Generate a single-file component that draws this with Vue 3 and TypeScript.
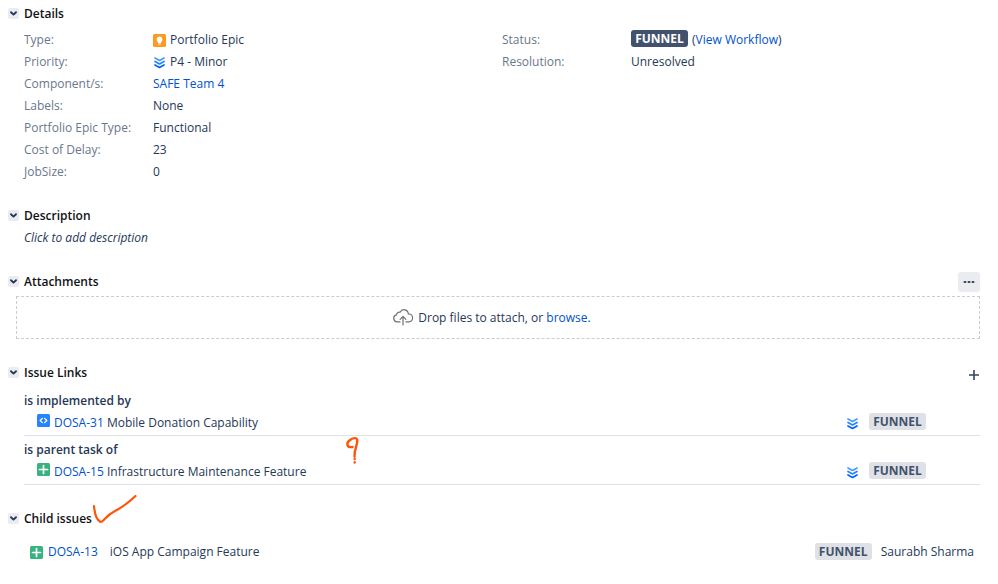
<script setup lang="ts">
import { reactive } from 'vue'

type IconName = 'epic' | 'priority' | 'code' | 'plus'

interface Field {
  label: string
  value: string
  icon?: IconName
  link?: boolean
}

interface LinkGroup {
  relation: string
  icon: IconName
  issueKey: string
  summary: string
  status: string
}

const fields: Field[] = [
  { label: 'Type:', value: 'Portfolio Epic', icon: 'epic' },
  { label: 'Priority:', value: 'P4 - Minor', icon: 'priority' },
  { label: 'Component/s:', value: 'SAFE Team 4', link: true },
  { label: 'Labels:', value: 'None' },
  { label: 'Portfolio Epic Type:', value: 'Functional' },
  { label: 'Cost of Delay:', value: '23' },
  { label: 'JobSize:', value: '0' },
]

const linkGroups: LinkGroup[] = [
  { relation: 'is implemented by', icon: 'code', issueKey: 'DOSA-31', summary: 'Mobile Donation Capability', status: 'FUNNEL' },
  { relation: 'is parent task of', icon: 'plus', issueKey: 'DOSA-15', summary: 'Infrastructure Maintenance Feature', status: 'FUNNEL' },
]

const open = reactive({ details: true, description: true, attachments: true, links: true, children: true })
</script>

<template>
  <main class="issue">
    <svg class="defs" width="0" height="0" aria-hidden="true">
      <symbol id="chevron" viewBox="0 0 11 11">
        <path d="M3 4.2 5.5 6.6 8 4.2" fill="none" stroke="#253858" stroke-width="1.9" stroke-linecap="round" stroke-linejoin="round" />
      </symbol>
      <symbol id="epic" viewBox="0 0 13 13">
        <rect width="13" height="13" rx="1.5" fill="#ff991f" />
        <path d="M6.5 2.4a3 3 0 0 0-1.6 5.5v1h3.2v-1a3 3 0 0 0-1.6-5.5zM5.1 9.5h2.8v.9H5.1z" fill="#fff" />
      </symbol>
      <symbol id="priority" viewBox="0 0 13 13">
        <g fill="none" stroke-width="1.7" stroke-linecap="round" stroke-linejoin="round">
          <path d="M2 1.9 6.5 4.4 11 1.9" stroke="#4c9aff" />
          <path d="M2 5.4 6.5 7.9 11 5.4" stroke="#2684ff" />
          <path d="M2 8.9 6.5 11.4 11 8.9" stroke="#0065ff" />
        </g>
      </symbol>
      <symbol id="code" viewBox="0 0 13 13">
        <rect width="13" height="13" rx="1.5" fill="#2684ff" />
        <path d="M5.3 4.4 3.2 6.5l2.1 2.1M7.7 4.4l2.1 2.1-2.1 2.1" fill="none" stroke="#fff" stroke-width="1.3" stroke-linecap="round" stroke-linejoin="round" />
      </symbol>
      <symbol id="plus" viewBox="0 0 13 13">
        <rect width="13" height="13" rx="1.5" fill="#36b37e" />
        <path d="M6.5 2.5v8M2.5 6.5h8" stroke="#fff" stroke-width="1.7" stroke-linecap="round" />
      </symbol>
    </svg>

    <section class="module details">
      <header class="heading">
        <button class="toggle" type="button" aria-label="Toggle details" :aria-expanded="open.details" @click="open.details = !open.details">
          <svg><use href="#chevron" /></svg>
        </button>
        <h2>Details</h2>
      </header>
      <div v-if="open.details" class="columns">
        <dl>
          <div v-for="f in fields" :key="f.label" class="field">
            <dt>{{ f.label }}</dt>
            <dd>
              <svg v-if="f.icon" class="icon"><use :href="'#' + f.icon" /></svg>
              <a v-if="f.link" href="#">{{ f.value }}</a>
              <span v-else>{{ f.value }}</span>
            </dd>
          </div>
        </dl>
        <dl>
          <div class="field">
            <dt>Status:</dt>
            <dd>
              <span class="lozenge dark">FUNNEL</span>
              <span>(<a href="#">View Workflow</a>)</span>
            </dd>
          </div>
          <div class="field">
            <dt>Resolution:</dt>
            <dd>Unresolved</dd>
          </div>
        </dl>
      </div>
    </section>

    <section class="module description">
      <header class="heading">
        <button class="toggle" type="button" aria-label="Toggle description" :aria-expanded="open.description" @click="open.description = !open.description">
          <svg><use href="#chevron" /></svg>
        </button>
        <h2>Description</h2>
      </header>
      <p v-if="open.description" class="placeholder">Click to add description</p>
    </section>

    <section class="module attachments">
      <header class="heading">
        <button class="toggle" type="button" aria-label="Toggle attachments" :aria-expanded="open.attachments" @click="open.attachments = !open.attachments">
          <svg><use href="#chevron" /></svg>
        </button>
        <h2>Attachments</h2>
        <button class="more" type="button" aria-label="Attachment options">
          <svg viewBox="0 0 12 4"><g fill="#344563"><rect x="0.5" y="1" width="3" height="2" rx="1" /><rect x="4.5" y="1" width="3" height="2" rx="1" /><rect x="8.5" y="1" width="3" height="2" rx="1" /></g></svg>
        </button>
      </header>
      <div v-if="open.attachments" class="dropzone">
        <svg class="cloud" viewBox="0 0 20 17">
          <g fill="none" stroke="#707070" stroke-width="1.2" stroke-linecap="round" stroke-linejoin="round">
            <path d="M7 12.9H4.2A3.6 3.6 0 0 1 3.5 5.8 3 3 0 0 1 7.1 3.2 4.3 4.3 0 0 1 15.3 4.9a4 4 0 0 1 .6 8H13" />
            <path d="M10 16V7.6M7.1 10.3 10 7.4l2.9 2.9" />
          </g>
        </svg>
        <span>Drop files to attach, or <a href="#">browse.</a></span>
      </div>
    </section>

    <section class="module links">
      <header class="heading">
        <button class="toggle" type="button" aria-label="Toggle issue links" :aria-expanded="open.links" @click="open.links = !open.links">
          <svg><use href="#chevron" /></svg>
        </button>
        <h2>Issue Links</h2>
        <button class="add" type="button" aria-label="Add issue link">
          <svg viewBox="0 0 12 12"><path d="M6 1v10M1 6h10" stroke="#344563" stroke-width="1.6" /></svg>
        </button>
      </header>
      <div v-if="open.links" class="groups">
        <div v-for="g in linkGroups" :key="g.issueKey" class="group">
          <h3>{{ g.relation }}</h3>
          <div class="link-row">
            <svg class="icon raised"><use :href="'#' + g.icon" /></svg>
            <p><a href="#">{{ g.issueKey }}</a> {{ g.summary }}</p>
            <svg class="icon prio"><use href="#priority" /></svg>
            <span class="lozenge">{{ g.status }}</span>
          </div>
        </div>
        <svg class="mark question" viewBox="0 0 16 30" aria-hidden="true">
          <g fill="none" stroke="#ff5409" stroke-linecap="round" stroke-linejoin="round">
            <path d="M7.5 11C1.5 12 1.2 7 4.5 4.5 7.5 1.8 12.3 1 12.3 4.5 12.5 9 9 14 9.5 20.5" stroke-width="2.4" />
            <path d="M9.7 22.7v.2M9.7 26.3v.3" stroke-width="2.4" />
          </g>
        </svg>
      </div>
    </section>

    <section class="module children">
      <header class="heading">
        <button class="toggle" type="button" aria-label="Toggle child issues" :aria-expanded="open.children" @click="open.children = !open.children">
          <svg><use href="#chevron" /></svg>
        </button>
        <h2>Child issues</h2>
        <svg class="mark check" viewBox="0 0 46 30" aria-hidden="true">
          <path d="M2 12C2.5 18 4.5 26 8.5 28 12 28 13 22 23 17 31 13 36 9 43.5 2" fill="none" stroke="#ff5409" stroke-width="2.2" stroke-linecap="round" stroke-linejoin="round" />
        </svg>
      </header>
      <div v-if="open.children" class="child-row">
        <svg class="icon"><use href="#plus" /></svg>
        <a href="#">DOSA-13</a>
        <span class="child-summary">iOS App Campaign Feature</span>
        <span class="lozenge">FUNNEL</span>
        <span class="assignee">Saurabh Sharma</span>
      </div>
    </section>
  </main>
</template>

<style>
body {
  background: #fff;
}
</style>

<style scoped>
.issue {
  box-sizing: border-box;
  padding: 4px 18px 20px 8px;
  color: #253858;
  font: 12px/22px "Open Sans", "Noto Sans", sans-serif;
}
.defs {
  position: absolute;
}
h2,
h3,
p,
dl,
dd {
  margin: 0;
}
h2,
h3 {
  font-size: 12px;
  font-weight: 600;
}
h2 {
  color: #101214;
}
a {
  color: #0052cc;
  text-decoration: none;
}
button {
  padding: 0;
  border: 0;
  cursor: pointer;
}
.heading {
  position: relative;
  display: flex;
  align-items: center;
  height: 20px;
}
.toggle {
  display: flex;
  width: 11px;
  height: 11px;
  margin: 0 5px 2px 0;
  border-radius: 2px;
  background: #ebecf0;
}
.toggle svg {
  width: 11px;
  height: 11px;
}
.columns {
  display: grid;
  grid-template-columns: 1fr 1fr;
  padding: 5px 0 0 16px;
}
.field {
  display: grid;
  grid-template-columns: 129px 1fr;
  height: 22px;
}
dt {
  color: #6b778c;
}
dd {
  display: flex;
  align-items: center;
  gap: 4px;
}
.icon {
  flex: none;
  width: 13px;
  height: 13px;
}
.lozenge {
  box-sizing: border-box;
  flex: none;
  width: 57px;
  height: 17px;
  margin-bottom: 4px;
  border-radius: 3px;
  background: #dfe1e6;
  color: #42526e;
  font-size: 12px;
  font-weight: 700;
  line-height: 17px;
  text-align: center;
}
.lozenge.dark {
  background: #42526e;
  color: #fff;
}
.description {
  margin-top: 23px;
}
.placeholder {
  padding: 1px 0 0 16px;
  font-style: italic;
}
.attachments {
  margin-top: 23px;
}
.more {
  display: flex;
  align-items: center;
  justify-content: center;
  width: 22px;
  height: 20px;
  margin-left: auto;
  border-radius: 3px;
  background: #ebecf0;
}
.more svg {
  width: 12px;
  height: 4px;
}
.dropzone {
  display: flex;
  align-items: center;
  justify-content: center;
  gap: 5px;
  height: 41px;
  margin: 4px 0 0 8px;
  padding-right: 12px;
  border: 1px dashed #ccc;
}
.cloud {
  width: 20px;
  height: 17px;
}
.links {
  margin-top: 24px;
}
.add {
  display: flex;
  margin: 4px 0 0 auto;
  background: none;
}
.add svg {
  width: 12px;
  height: 12px;
}
.groups {
  position: relative;
  padding: 7px 0 0 16px;
}
.group {
  border-bottom: 1px solid #dfe1e6;
  padding-bottom: 1px;
}
.group + .group {
  padding-top: 3px;
}
.link-row {
  display: flex;
  align-items: center;
  height: 22px;
  padding: 0 54px 0 13px;
}
.link-row p {
  flex: 1;
  margin-left: 4px;
}
.raised {
  margin-bottom: 6px;
}
.prio {
  margin-right: 10px;
}
.mark {
  position: absolute;
}
.question {
  top: 53px;
  left: 337px;
  width: 16px;
  height: 30px;
}
.children {
  margin-top: 24px;
}
.check {
  top: -15px;
  left: 84px;
  width: 46px;
  height: 30px;
}
.child-row {
  display: flex;
  align-items: center;
  height: 22px;
  padding: 12px 6px 0 22px;
}
.child-row a {
  margin-left: 5px;
}
.child-row .lozenge {
  margin-bottom: 2px;
}
.child-summary {
  flex: 1;
  margin-left: 12px;
}
.assignee {
  margin-left: 9px;
}
</style>
